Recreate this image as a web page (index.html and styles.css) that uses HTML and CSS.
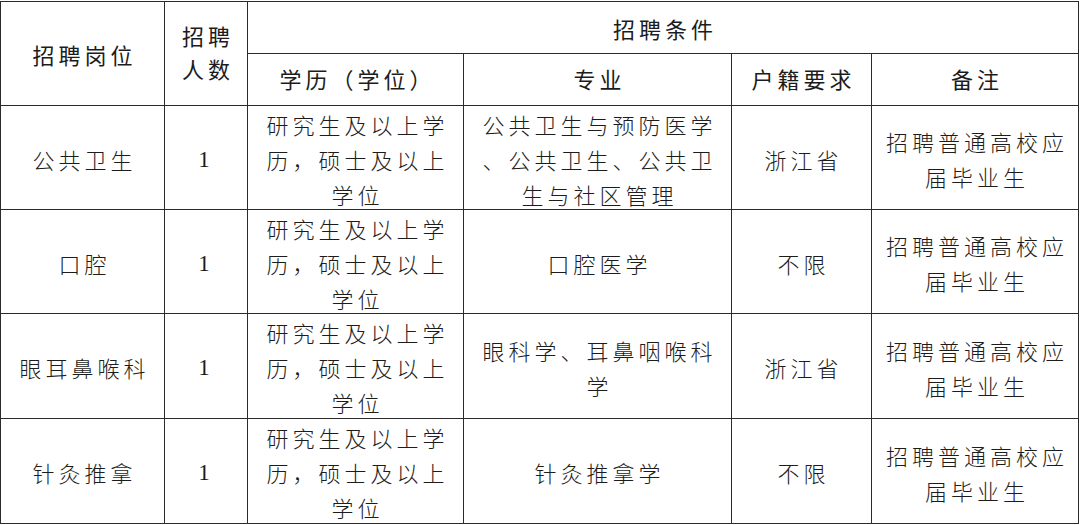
FILE: index.html
```html
<!DOCTYPE html>
<html lang="zh-CN">
<head>
<meta charset="utf-8">
<title>招聘岗位</title>
<link rel="stylesheet" href="styles.css">
</head>
<body>
<table class="jobs">
  <colgroup>
    <col class="c1"><col class="c2"><col class="c3"><col class="c4"><col class="c5"><col class="c6">
  </colgroup>
  <thead>
    <tr class="h1">
      <th rowspan="2"><div class="t sh3">招聘岗位</div></th>
      <th rowspan="2"><div class="t tight sh2">招聘<br>人数</div></th>
      <th colspan="4"><div class="t sh3">招聘条件</div></th>
    </tr>
    <tr class="h2">
      <th><div class="t">学历（学位）</div></th>
      <th><div class="t">专业</div></th>
      <th><div class="t">户籍要求</div></th>
      <th><div class="t">备注</div></th>
    </tr>
  </thead>
  <tbody>
    <tr class="r1">
      <td><div class="t">公共卫生</div></td>
      <td class="numcell"><div class="t num">1</div></td>
      <td><div class="t">研究生及以上学<br>历，硕士及以上<br>学位</div></td>
      <td><div class="t">公共卫生与预防医学<br>、公共卫生、公共卫<br>生与社区管理</div></td>
      <td><div class="t">浙江省</div></td>
      <td><div class="t">招聘普通高校应<br>届毕业生</div></td>
    </tr>
    <tr class="r2">
      <td><div class="t">口腔</div></td>
      <td class="numcell"><div class="t num">1</div></td>
      <td><div class="t">研究生及以上学<br>历，硕士及以上<br>学位</div></td>
      <td><div class="t">口腔医学</div></td>
      <td><div class="t">不限</div></td>
      <td><div class="t">招聘普通高校应<br>届毕业生</div></td>
    </tr>
    <tr class="r3">
      <td><div class="t">眼耳鼻喉科</div></td>
      <td class="numcell"><div class="t num">1</div></td>
      <td><div class="t">研究生及以上学<br>历，硕士及以上<br>学位</div></td>
      <td><div class="t">眼科学、耳鼻咽喉科<br>学</div></td>
      <td><div class="t">浙江省</div></td>
      <td><div class="t">招聘普通高校应<br>届毕业生</div></td>
    </tr>
    <tr class="r4">
      <td><div class="t">针灸推拿</div></td>
      <td class="numcell"><div class="t num">1</div></td>
      <td><div class="t">研究生及以上学<br>历，硕士及以上<br>学位</div></td>
      <td><div class="t">针灸推拿学</div></td>
      <td><div class="t">不限</div></td>
      <td><div class="t">招聘普通高校应<br>届毕业生</div></td>
    </tr>
  </tbody>
</table>
</body>
</html>
```

FILE: styles.css
```css
html, body {
  margin: 0;
  padding: 0;
  background: #ffffff;
}
body {
  padding-top: 1px;
  font-family: "Noto Sans CJK SC", "Noto Sans", sans-serif;
  color: #1c1c1c;
}
.jobs {
  border-collapse: collapse;
  table-layout: fixed;
  width: 1079px;
}
.c1 { width: 164px; }
.c2 { width: 83px; }
.c3 { width: 216px; }
.c4 { width: 268px; }
.c5 { width: 140px; }
.c6 { width: 207px; }

.jobs th, .jobs td {
  border: 1px solid #2b2b2b;
  padding: 0 3px 0 7px;
  text-align: center;
  vertical-align: middle;
  font-size: 22px;
  letter-spacing: 4px;
  line-height: 35px;
  overflow: visible;
}
.jobs th {
  font-weight: 400;
}
.jobs td {
  font-weight: 300;
}
.jobs td.numcell {
  padding: 0 4px 0 0;
}
.h1 { height: 52px; }
.h2 { height: 52px; }
.r1, .r2 { height: 104px; }
.r3, .r4 { height: 105px; }

.t {
  margin: 0 0 -3px;
}
.h2 .t {
  margin: -1px 0 1px;
}
.sh3 {
  margin: 1px 0 -1px;
}
.sh2 {
  margin: -2px 0 2px;
}
.tight {
  line-height: 33px;
}
.num {
  font-family: "Liberation Serif", "Times New Roman", serif;
  letter-spacing: 0;
  font-size: 23px;
}
```
